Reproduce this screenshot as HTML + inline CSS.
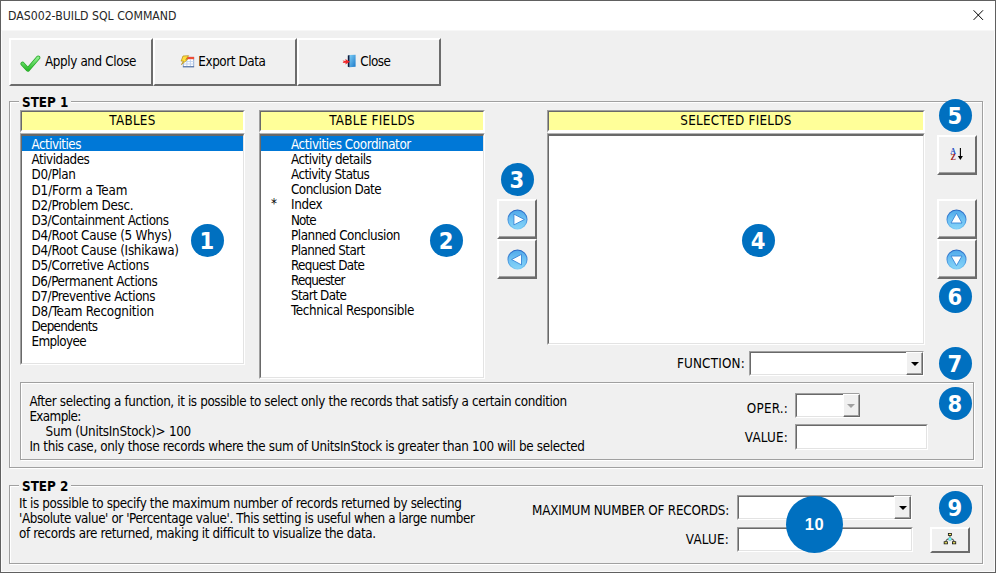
<!DOCTYPE html>
<html lang="en">
<head>
<meta charset="utf-8">
<title>DAS002-BUILD SQL COMMAND</title>
<style>
*{box-sizing:border-box;margin:0;padding:0}
html,body{width:996px;height:573px;overflow:hidden;background:#f0f0f0}
body{position:relative;font-family:"DejaVu Sans Condensed","Liberation Sans",sans-serif;font-size:13.33px;letter-spacing:-0.38px;color:#000;line-height:15px}
.abs{position:absolute}
#win{position:absolute;left:0;top:0;width:996px;height:573px;border:1px solid #606060;background:#f0f0f0;box-shadow:inset 0 0 0 1px rgba(255,255,255,.75)}
#titlebar{position:absolute;left:0;top:0;width:994px;height:30px;background:linear-gradient(#fff 0,#fff 29px,#f7f7f7 29px,#f7f7f7 30px)}
#title{position:absolute;left:8px;top:9px;color:#262626;font-size:12.2px;letter-spacing:0;line-height:14px;white-space:nowrap}
.btn{position:absolute;background:#f0f0f0;border:2px solid;border-color:#fff #6c6c6c #6c6c6c #fff}
.btn.sm:after{content:"";position:absolute;left:0;top:0;right:0;bottom:0;border-bottom:1px solid #a0a0a0}
.btn .lbl{position:absolute;white-space:nowrap;line-height:18px;top:13px}
.sunk{position:absolute;border-top:1px solid #a0a0a0;border-left:1px solid #a0a0a0;border-right:1px solid #fff;border-bottom:1px solid #fff;background:#fff;padding:1px}
.sunk:after{content:"";position:absolute;left:0;top:0;right:0;bottom:0;border-top:1px solid #696969;border-left:1px solid #696969;border-right:1px solid #e3e3e3;border-bottom:1px solid #e3e3e3;pointer-events:none}
.t3{border-top:1px solid #b4b4b4}
.t3:after{border-top-width:2px}
.t3 .list{top:2px}
.hdr:after{border-right-color:#fff;border-bottom-color:#fff}
.hdr{border-bottom-width:2px;background:#ffff99;text-align:center;line-height:17px;white-space:nowrap;letter-spacing:0.28px}
.frame{position:absolute;border:1px solid #a0a0a0;box-shadow:1px 1px 0 #fff, inset 1px 1px 0 #fff}
.cap{position:absolute;background:#f0f0f0;font-weight:bold;white-space:nowrap;padding:0 3px;letter-spacing:0}
.list{position:absolute;left:1px;top:1px;right:1px;bottom:1px}
.row{position:absolute;left:0;right:0;height:15.17px;line-height:18.2px;white-space:nowrap;letter-spacing:-0.44px}
.row.sel{background:#0078d7;color:#fff}
.star{position:absolute;left:10px;top:-1px}
.badge{position:absolute;border-radius:50%;background:#0070c0;color:#fff;font-family:"Liberation Sans","DejaVu Sans",sans-serif;font-weight:bold;text-align:center;letter-spacing:0}
.b32{width:32.8px;height:32.8px;line-height:34.8px;padding-right:1.2px;font-size:23.5px;font-family:"DejaVu Sans Condensed","DejaVu Sans","Liberation Sans",sans-serif}
.cbtn{position:absolute;z-index:2;background:#f0f0f0;border-top:1px solid #fff;border-left:1px solid #fff;border-right:1px solid #696969;border-bottom:1px solid #696969}
.cbtn:after{content:"";position:absolute;left:3.5px;top:9px;border:4px solid transparent;border-top:4px solid #000;border-bottom:0}
.cbtn:before{content:"";position:absolute;left:0;top:0;right:0;bottom:0;border-right:1px solid #a0a0a0;border-bottom:1px solid #a0a0a0}
.cbtn.dis:after{border-top-color:#a0a0a0}
.txt{position:absolute;white-space:nowrap}
.u1{letter-spacing:0.2px}
</style>
</head>
<body>
<div id="win">
<div id="titlebar"></div>
</div>
<div id="title">DAS002-BUILD SQL COMMAND</div>
<svg class="abs" style="left:973px;top:10px" width="11" height="11" viewBox="0 0 11 11"><path d="M0.6 0.3 L10 9.9 M10 0.3 L0.6 9.9" stroke="#000" stroke-width="1" fill="none"/></svg>

<svg width="0" height="0" style="position:absolute"><defs>
<linearGradient id="gblue" x1="0" y1="0" x2="0" y2="1"><stop offset="0" stop-color="#4fa8ea"/><stop offset="0.45" stop-color="#6cc0f2"/><stop offset="1" stop-color="#86d4f8"/></linearGradient>
<linearGradient id="gblues" x1="0" y1="0" x2="0" y2="1"><stop offset="0" stop-color="#2a68c4"/><stop offset="0.6" stop-color="#4a98e0"/><stop offset="1" stop-color="#7ccdf5"/></linearGradient>
<linearGradient id="ggreen" x1="0" y1="0" x2="0" y2="1"><stop offset="0" stop-color="#8cee8c"/><stop offset="1" stop-color="#2cbc2c"/></linearGradient>
<linearGradient id="gdoor" x1="0" y1="0" x2="1" y2="1"><stop offset="0" stop-color="#7fd0f7"/><stop offset="1" stop-color="#1c78c8"/></linearGradient>
</defs></svg>

<!-- toolbar buttons -->
<div class="btn" id="b-apply" style="left:9px;top:38px;width:144px;height:48px">
<svg class="abs" style="left:9px;top:15px" width="22" height="19" viewBox="0 0 22 19"><path d="M2.6 8.8 L7.9 14.6 L18.2 2.7" fill="none" stroke="#27a627" stroke-width="4.2" stroke-linecap="round" stroke-linejoin="round"/><path d="M2.6 8.8 L7.9 14.6 L18.2 2.7" fill="none" stroke="url(#ggreen)" stroke-width="2.8" stroke-linecap="round" stroke-linejoin="round"/></svg>
<span class="lbl" style="left:34px">Apply and Close</span></div>
<div class="btn" id="b-export" style="left:153px;top:38px;width:144px;height:48px">
<svg class="abs" style="left:25px;top:14px" width="15" height="14" viewBox="0 0 15 14"><rect x="3.3" y="3.3" width="10.4" height="9.4" fill="#fff" stroke="#8aa4cf" stroke-width="0.9"/><rect x="2.9" y="2.9" width="11.2" height="2.3" fill="#ee4e36"/><path d="M3.3 7.6 H13.7 M3.3 10 H13.7 M6.9 5.2 V12.7 M10.4 5.2 V12.7" stroke="#bcd0ee" stroke-width="0.9"/><path d="M2.9 12.8 H14.1" stroke="#4c6c9e" stroke-width="1"/><path transform="translate(0,0.8)" d="M3 1.2 L8.6 0.9 L5.7 4.7 L7.6 4.7 L1.4 9.8 L3.5 6.3 L1.1 6.3 Z" fill="#ffde3c" stroke="#b58a14" stroke-width="0.7" stroke-linejoin="round"/></svg>
<span class="lbl" style="left:43.3px;letter-spacing:-0.42px">Export Data</span></div>
<div class="btn" id="b-close" style="left:297px;top:38px;width:144px;height:48px">
<svg class="abs" style="left:43px;top:14px" width="15" height="14" viewBox="0 0 15 14"><path d="M7.4 0.9 L13.6 0.7 L13.6 12.7 L7.4 13.2 Z" fill="url(#gdoor)"/><path d="M5.8 1.6 L7.5 0.9 L7.5 13.2 L5.8 12.7 Z" fill="#0b1c40"/><path d="M0.6 6.5 L3.7 6.9 L3.3 5 L7.9 7.8 L3.3 10.6 L3.7 8.7 L0.6 9.1 L1.7 7.8 Z" fill="#f0282a"/></svg>
<span class="lbl" style="left:61.3px;letter-spacing:-0.54px">Close</span></div>

<!-- STEP 1 frame -->
<div class="frame" style="left:9px;top:101px;width:974px;height:367px"></div>
<div class="cap" style="left:19px;top:95px">STEP 1</div>

<div class="sunk hdr" style="left:20px;top:110px;width:225px;height:23px">TABLES</div>
<div class="sunk hdr" style="left:259px;top:110px;width:226px;height:23px">TABLE FIELDS</div>
<div class="sunk hdr" style="left:547px;top:110px;width:378px;height:23px">SELECTED FIELDS</div>

<div class="sunk t3" id="lb1" style="left:20px;top:133px;width:225px;height:232px"><div class="list">
<div class="row sel" style="top:0.0px;padding-left:9.5px;letter-spacing:-0.529px">Activities</div>
<div class="row" style="top:15.17px;padding-left:9.5px;letter-spacing:-0.484px">Atividades</div>
<div class="row" style="top:30.34px;padding-left:9.5px;letter-spacing:-0.340px">D0/Plan</div>
<div class="row" style="top:45.51px;padding-left:9.5px;letter-spacing:-0.117px">D1/Form a Team</div>
<div class="row" style="top:60.68px;padding-left:9.5px;letter-spacing:-0.333px">D2/Problem Desc.</div>
<div class="row" style="top:75.85px;padding-left:9.5px;letter-spacing:-0.411px">D3/Containment Actions</div>
<div class="row" style="top:91.02px;padding-left:9.5px;letter-spacing:-0.278px">D4/Root Cause (5 Whys)</div>
<div class="row" style="top:106.19px;padding-left:9.5px;letter-spacing:-0.275px">D4/Root Cause (Ishikawa)</div>
<div class="row" style="top:121.36px;padding-left:9.5px;letter-spacing:-0.303px">D5/Corretive Actions</div>
<div class="row" style="top:136.53px;padding-left:9.5px;letter-spacing:-0.387px">D6/Permanent Actions</div>
<div class="row" style="top:151.7px;padding-left:9.5px;letter-spacing:-0.400px">D7/Preventive Actions</div>
<div class="row" style="top:166.87px;padding-left:9.5px;letter-spacing:-0.229px">D8/Team Recognition</div>
<div class="row" style="top:182.04px;padding-left:9.5px;letter-spacing:-0.707px">Dependents</div>
<div class="row" style="top:197.21px;padding-left:9.5px;letter-spacing:-0.611px">Employee</div>
</div></div>
<div class="sunk t3" id="lb2" style="left:259px;top:133px;width:226px;height:246px"><div class="list">
<div class="row sel" style="top:0.0px;padding-left:30px;letter-spacing:-0.421px">Activities Coordinator</div>
<div class="row" style="top:15.1px;padding-left:30px;letter-spacing:-0.520px">Activity details</div>
<div class="row" style="top:30.2px;padding-left:30px;letter-spacing:-0.569px">Activity Status</div>
<div class="row" style="top:45.3px;padding-left:30px;letter-spacing:-0.511px">Conclusion Date</div>
<div class="row" style="top:60.4px;padding-left:30px;letter-spacing:-0.340px"><span class="star">*</span>Index</div>
<div class="row" style="top:75.5px;padding-left:30px;letter-spacing:-0.907px">Note</div>
<div class="row" style="top:90.6px;padding-left:30px;letter-spacing:-0.464px">Planned Conclusion</div>
<div class="row" style="top:105.7px;padding-left:30px;letter-spacing:-0.573px">Planned Start</div>
<div class="row" style="top:120.8px;padding-left:30px;letter-spacing:-0.658px">Request Date</div>
<div class="row" style="top:135.9px;padding-left:30px;letter-spacing:-0.815px">Requester</div>
<div class="row" style="top:151.0px;padding-left:30px;letter-spacing:-0.662px">Start Date</div>
<div class="row" style="top:166.1px;padding-left:30px;letter-spacing:-0.360px">Technical Responsible</div>
</div></div>
<div class="sunk t3" id="lb4" style="left:547px;top:133px;width:378px;height:212px"></div>

<!-- move buttons -->
<div class="btn sm" style="left:497px;top:199px;width:40px;height:40px"><svg class="abs" style="left:7.6px;top:8px" width="21" height="21" viewBox="0 0 21 21"><circle cx="10.5" cy="10.5" r="9.5" fill="url(#gblue)" stroke="url(#gblues)" stroke-width="1.1"/><path d="M6.9 5.1 L17.4 10.5 L6.9 15.9 Z" fill="#fff" stroke="#3585d6" stroke-width="0.9" stroke-linejoin="round"/></svg></div>
<div class="btn sm" style="left:497px;top:239px;width:40px;height:40px"><svg class="abs" style="left:7.6px;top:8px" width="21" height="21" viewBox="0 0 21 21"><circle cx="10.5" cy="10.5" r="9.5" fill="url(#gblue)" stroke="url(#gblues)" stroke-width="1.1"/><path d="M14.5 5.3 L4.6 10.5 L14.5 15.9 Z" fill="#fff" stroke="#3585d6" stroke-width="0.9" stroke-linejoin="round"/></svg></div>
<!-- sort / up / down -->
<div class="btn sm" style="left:937px;top:135px;width:40px;height:40px">
<svg class="abs" style="left:11px;top:10px" width="16" height="15" viewBox="0 0 16 15"><text x="0.3" y="6.7" font-family="Liberation Serif,serif" font-weight="bold" font-size="7.8" fill="#2450c4">A</text><text x="0.5" y="12.8" font-family="Liberation Serif,serif" font-weight="bold" font-size="8.2" fill="#9c1c1c">Z</text><path d="M10.4 0.9 V11" stroke="#000" stroke-width="1.1"/><path d="M7.9 8.9 H12.9 L10.4 12.9 Z" fill="#000"/></svg></div>
<div class="btn sm" style="left:937px;top:199px;width:40px;height:40px"><svg class="abs" style="left:7.4px;top:7.9px" width="21" height="21" viewBox="0 0 21 21"><circle cx="10.5" cy="10.5" r="9.5" fill="url(#gblue)" stroke="url(#gblues)" stroke-width="1.1"/><path d="M5 14 L10.5 4.3 L16 14 Z" fill="#fff" stroke="#3585d6" stroke-width="0.9" stroke-linejoin="round"/></svg></div>
<div class="btn sm" style="left:937px;top:239px;width:40px;height:40px"><svg class="abs" style="left:7.4px;top:7.9px" width="21" height="21" viewBox="0 0 21 21"><circle cx="10.5" cy="10.5" r="9.5" fill="url(#gblue)" stroke="url(#gblues)" stroke-width="1.1"/><path d="M5 7 L10.5 16.7 L16 7 Z" fill="#fff" stroke="#3585d6" stroke-width="0.9" stroke-linejoin="round"/></svg></div>

<!-- function combo -->
<div class="txt u1" style="left:640px;top:356px;width:105px;text-align:right">FUNCTION:</div>
<div class="sunk" style="left:749px;top:351px;width:175px;height:25px"><div class="cbtn" style="left:156px;top:0px;width:17px;height:23px"></div></div>

<!-- info panel -->
<div class="frame" style="left:20px;top:382px;width:954px;height:78px"></div>
<div class="txt" id="t1" style="left:29.6px;top:394px">After selecting a function, it is possible to select only the records that satisfy a certain condition</div>
<div class="txt" style="left:29.4px;top:409px;letter-spacing:-0.6px">Example:</div>
<div class="txt" style="left:45.6px;top:424px;letter-spacing:-0.28px">Sum (UnitsInStock)&gt; 100</div>
<div class="txt" id="t4" style="left:29.4px;top:439px;letter-spacing:-0.35px">In this case, only those records where the sum of UnitsInStock is greater than 100 will be selected</div>
<div class="txt u1" style="left:700px;top:401px;width:88px;text-align:right">OPER.:</div>
<div class="sunk" style="left:795px;top:393px;width:65px;height:25px"><div class="cbtn dis" style="left:46.5px;top:0px;width:17px;height:23px"></div></div>
<div class="txt u1" style="left:700px;top:429.6px;width:88px;text-align:right">VALUE:</div>
<div class="sunk" style="left:795px;top:424px;width:133px;height:26px"></div>

<!-- STEP 2 frame -->
<div class="frame" style="left:9px;top:485px;width:974px;height:79px"></div>
<div class="cap" style="left:19px;top:479px">STEP 2</div>
<div class="txt" id="s1" style="left:19px;top:496.4px;letter-spacing:-0.36px">It is possible to specify the maximum number of records returned by selecting</div>
<div class="txt" id="s2" style="left:19px;top:511.4px;letter-spacing:-0.41px">'Absolute value' or 'Percentage value'. This setting is useful when a large number</div>
<div class="txt" id="s3" style="left:19px;top:526.4px;letter-spacing:-0.36px">of records are returned, making it difficult to visualize the data.</div>
<div class="txt" id="mx" style="left:500px;top:503.4px;width:229px;text-align:right;letter-spacing:-0.22px">MAXIMUM NUMBER OF RECORDS:</div>
<div class="sunk" style="left:737px;top:495px;width:175px;height:25px"><div class="cbtn" style="left:156px;top:0px;width:17px;height:23px"></div></div>
<div class="txt u1" style="left:600px;top:532px;width:129px;text-align:right">VALUE:</div>
<div class="sunk" style="left:737px;top:527px;width:176px;height:25px"></div>
<div class="btn" style="left:930px;top:527px;width:40px;height:26px"><svg class="abs" style="left:11px;top:3px" width="15" height="14" viewBox="0 0 15 14"><path d="M6.95 3.5 V7 M6.95 7 C4.6 6.6 3 7.8 2.8 9.8 M6.95 7 C9.3 6.6 10.9 7.8 11.1 9.8" fill="none" stroke="#5a5a5a" stroke-width="1.1"/><rect x="5.35" y="1.45" width="3.2" height="2" fill="#fbf060" stroke="#111" stroke-width="0.8"/><rect x="1.15" y="9.75" width="3.3" height="2.1" fill="#fbf060" stroke="#111" stroke-width="0.8"/><rect x="9.45" y="9.75" width="3.3" height="2.1" fill="#fbf060" stroke="#111" stroke-width="0.8"/><circle cx="6.95" cy="7.05" r="1.7" fill="#6ff" stroke="#8a9a9a" stroke-width="0.5"/></svg></div>

<!-- badges -->
<div class="badge b32" style="left:191.1px;top:224px">1</div>
<div class="badge b32" style="left:430.2px;top:224px">2</div>
<div class="badge b32" style="left:501px;top:163px">3</div>
<div class="badge b32" style="left:742.2px;top:224px">4</div>
<div class="badge b32" style="left:939px;top:99px">5</div>
<div class="badge b32" style="left:939px;top:280px">6</div>
<div class="badge b32" style="left:939px;top:347px">7</div>
<div class="badge b32" style="left:939px;top:387.4px">8</div>
<div class="badge b32" style="left:939px;top:491px">9</div>
<div class="badge" style="left:786.2px;top:496.2px;width:56.8px;height:57.2px;line-height:57.4px;font-size:16.5px;letter-spacing:0.6px">10</div>
</body>
</html>
